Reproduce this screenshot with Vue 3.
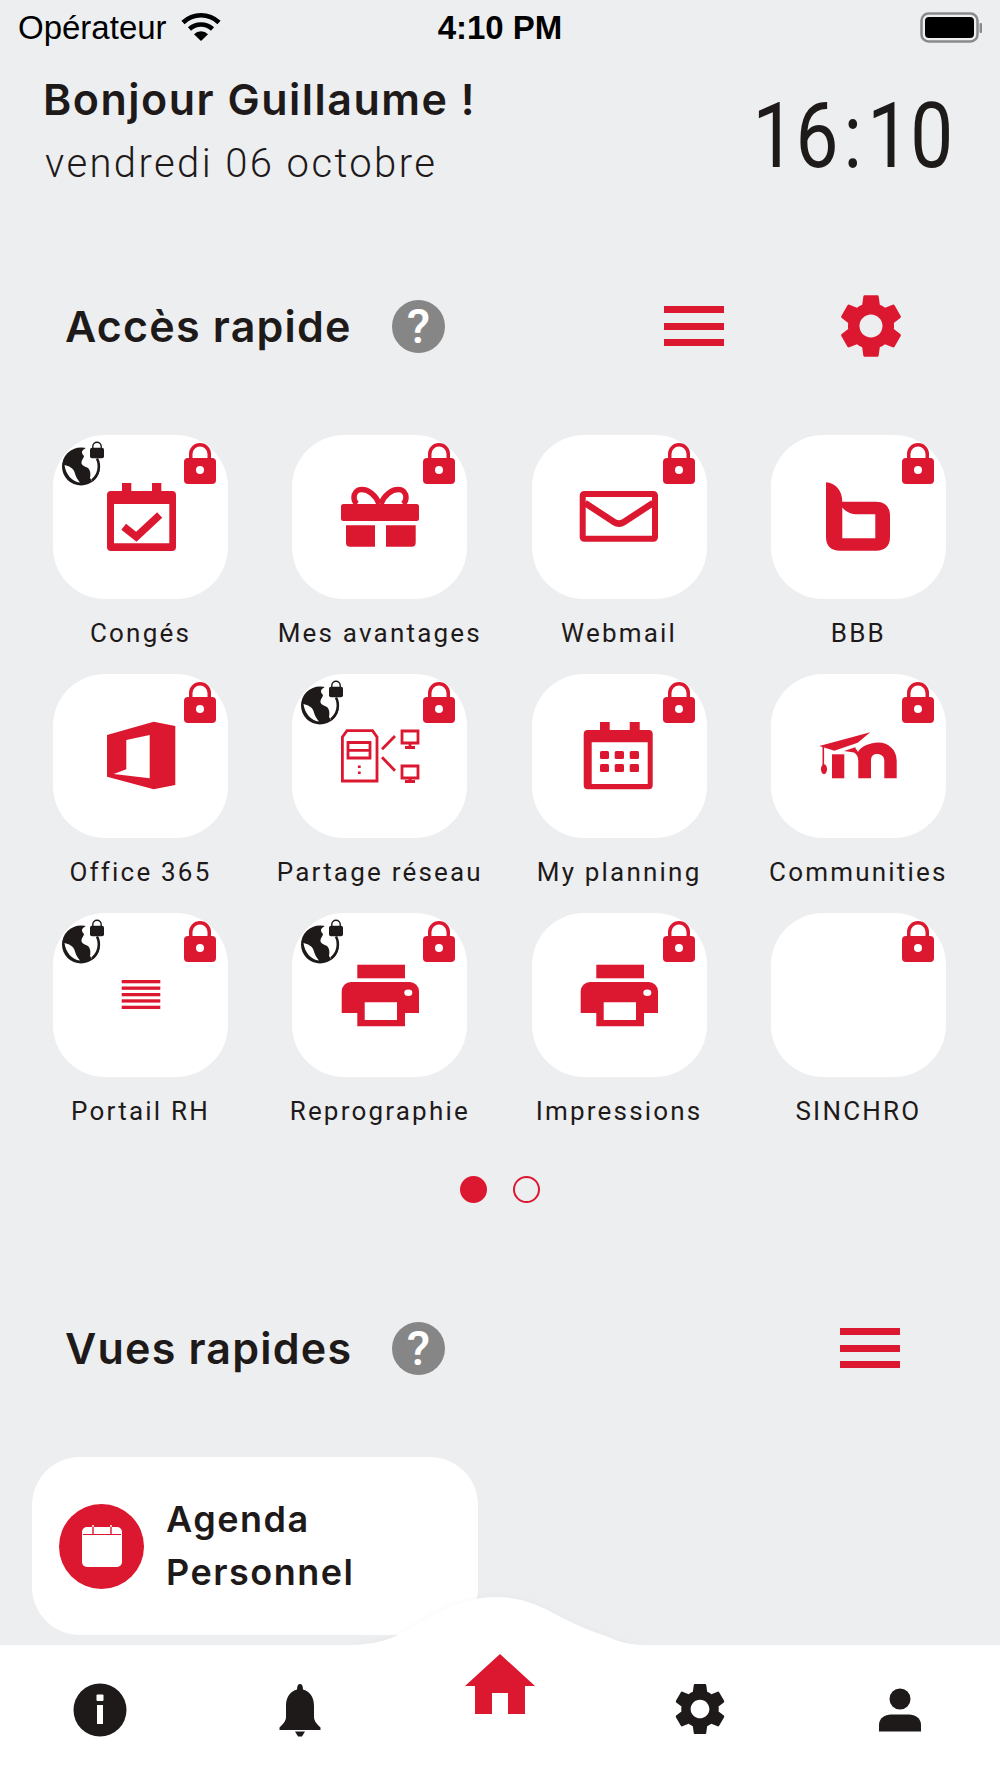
<script setup>
const tiles = [
  { label: 'Congés', icon: 'check', web: true },
  { label: 'Mes avantages', icon: 'gift' },
  { label: 'Webmail', icon: 'mail' },
  { label: 'BBB', icon: 'bbb' },
  { label: 'Office 365', icon: 'office' },
  { label: 'Partage réseau', icon: 'network', web: true },
  { label: 'My planning', icon: 'planning' },
  { label: 'Communities', icon: 'moodle' },
  { label: 'Portail RH', icon: 'lines', web: true },
  { label: 'Reprographie', icon: 'printer', web: true },
  { label: 'Impressions', icon: 'printer' },
  { label: 'SINCHRO', icon: '' }
]
const gear = 'M19.14 12.94c.04-.3.06-.61.06-.94 0-.32-.02-.64-.07-.94l2.03-1.58c.18-.14.23-.41.12-.61l-1.92-3.32c-.12-.22-.37-.29-.59-.22l-2.39.96c-.5-.38-1.03-.7-1.62-.94l-.36-2.54c-.04-.24-.24-.41-.48-.41h-3.84c-.24 0-.43.17-.47.41l-.36 2.54c-.59.24-1.13.57-1.62.94l-2.39-.96c-.22-.08-.47 0-.59.22L2.74 8.87c-.12.21-.08.47.12.61l2.03 1.58c-.05.3-.09.63-.09.94s.02.64.07.94l-2.03 1.58c-.18.14-.23.41-.12.61l1.92 3.32c.12.22.37.29.59.22l2.39-.96c.5.38 1.03.7 1.62.94l.36 2.54c.05.24.24.41.48.41h3.84c.24 0 .44-.17.47-.41l.36-2.54c.59-.24 1.13-.56 1.62-.94l2.39.96c.22.08.47 0 .59-.22l1.92-3.32c.12-.22.07-.47-.12-.61l-2.01-1.58zM12 15.6c-1.98 0-3.6-1.62-3.6-3.6s1.62-3.6 3.6-3.6 3.6 1.62 3.6 3.6-1.62 3.6-3.6 3.6z'
</script>

<template>
  <div class="phone">
    <div class="status">
      <div class="carrier">
        <span>Opérateur</span>
        <svg class="wifi" width="40" height="30" viewBox="0 0 40 30">
          <path d="M2 11.5a26 26 0 0 1 36 0" fill="none" stroke="#000" stroke-width="4.6" />
          <path d="M8.5 18a17 17 0 0 1 23 0" fill="none" stroke="#000" stroke-width="4.6" />
          <path d="M13 23.2a10 10 0 0 1 14 0L20 30z" fill="#000" />
        </svg>
      </div>
      <div class="clock-small">4:10 PM</div>
      <svg class="battery" width="62" height="32" viewBox="0 0 62 32">
        <rect x="1.5" y="1.5" width="56" height="28" rx="7" fill="none" stroke="#8a8a8a" stroke-width="2.5" />
        <rect x="5" y="5" width="49" height="21" rx="4" fill="#000" />
        <rect x="59.5" y="11" width="2.5" height="10" rx="1" fill="#8a8a8a" />
      </svg>
    </div>

    <header class="hello">
      <div>
        <h1>Bonjour Guillaume !</h1>
        <p>vendredi 06 octobre</p>
      </div>
      <div class="time">16<span class="colon">:</span>10</div>
    </header>

    <section class="head first">
      <h2>Accès rapide</h2>
      <span class="help">?</span>
      <div class="burger"><i></i><i></i><i></i></div>
      <svg class="cog" width="64" height="64" viewBox="2 2 20 20"><path :d="gear" fill="#dc1830" /></svg>
    </section>

    <div class="grid">
      <div v-for="t in tiles" :key="t.label" class="tile">
        <div class="card">
          <svg v-if="t.web" class="globe" width="46" height="46" viewBox="0 0 46 46">
            <circle cx="21" cy="26.500" r="19" fill="#1f1a1a" />
            <path d="M4.500 25C9 26 13 28 14.500 32 15.500 36 17 39 20 42.500 12 42 5.500 34 4.500 25z" fill="#fff" />
            <path d="M27 5H46V26H40C40 32 37 37 32 41L30 38C31 33 30 30 28 28 24 26 21 25 21.500 22 22 19 24 18 24 16 22 14 21 12 23 10 25 9 27 7 27 5z" fill="#fff" />
            <path d="M37 18.500A17.800 17.800 0 0 1 32 40.500" fill="none" stroke="#1f1a1a" stroke-width="2.600" />
            <rect x="30" y="7.700" width="14" height="10.600" rx="2" fill="#1f1a1a" />
            <path d="M32.800 8.500V6.500a4.200 4.200 0 0 1 8.400 0v2" fill="none" stroke="#1f1a1a" stroke-width="1.400" />
          </svg>
          <svg class="lock" width="32" height="41" viewBox="0 0 32 41">
            <rect x="0" y="15" width="32" height="26" rx="4" fill="#dc1830" />
            <path d="M6.750 17V11a9.250 9.250 0 0 1 18.500 0v6" fill="none" stroke="#dc1830" stroke-width="3.500" />
            <circle cx="16" cy="27" r="4" fill="#fff" />
          </svg>

          <svg v-if="t.icon" width="90" height="90" viewBox="0 0 90 90">
            <g v-if="t.icon === 'check'" fill="#dc1830">
              <path fill-rule="evenodd" d="M26 11h9.300v8h20.700v-8h9.300v8H76a4 4 0 0 1 4 4v52a4 4 0 0 1-4 4H15a4 4 0 0 1-4-4V23a4 4 0 0 1 4-4h11zM18 32v39.300h55.300V32z" />
              <path d="M27.700 54.700l12.600 10 23.400-21.700" fill="none" stroke="#dc1830" stroke-width="7.500" />
            </g>
            <g v-else-if="t.icon === 'gift'" fill="#dc1830">
              <rect x="6" y="32" width="78" height="17" rx="2.500" />
              <path d="M11 53.300h29v21.400H15a4 4 0 0 1-4-4zM51 53.300h29.700V70.700a4 4 0 0 1-4 4H51z" />
              <path d="M44 32c-3-9-11-14.500-17-14.500-5.500 0-8 4-8 8 0 3 1 5 3 6.500M46 32c3-9 11-14.500 17-14.500 5.500 0 8 4 8 8 0 3-1 5-3 6.500" fill="none" stroke="#dc1830" stroke-width="5.500" />
            </g>
            <g v-else-if="t.icon === 'mail'" fill="none" stroke="#dc1830">
              <rect x="8.700" y="22" width="72.300" height="44.700" rx="1.500" stroke-width="6" />
              <path d="M11 31l29 19c3.500 2.300 6.500 2.300 10 0l29-19" stroke-width="6.500" />
            </g>
            <path v-else-if="t.icon === 'bbb'" fill="#dc1830" fill-rule="evenodd" d="M13 10.300c9.500.7 16.300 8 16.300 19.400H63c9 0 14 5 14 14V65c0 9-5 13.700-14 13.700H27C18 78.700 13 74 13 65zM29.300 35.500c3.700 4.500 8.700 6.800 15.700 6.800h17.300v24H29.300z" />
            <path v-else-if="t.icon === 'office'" fill="#dc1830" fill-rule="evenodd" d="M11 24L57.700 10.700 79.300 15V74L57.700 78.300 11 65.700zM30.300 29L53.700 24V67.300L17.700 63 30.300 58.300z" />
            <g v-else-if="t.icon === 'network'" fill="none" stroke="#dc1830" stroke-width="2.800">
              <path d="M7.400 26L12 19.700H37.500L42 26V70H7.400z" />
              <path d="M13 31.500H35V47H13zM13 39.300H35" />
              <path d="M24.300 54.500v2.500M24.300 60.500v2.500" />
              <path d="M60 25L47 38.300M47 46.300L60 59.700" />
              <path d="M67 20H83V32H67zM75 32V36M70 36.500H80M67 55H83V67H67zM75 67V70.500M70 70.500H80" />
            </g>
            <g v-else-if="t.icon === 'planning'" fill="#dc1830">
              <path fill-rule="evenodd" d="M26 11h9.700v8h20v-8h10v8H75a4 4 0 0 1 3.700 4v51.300a4 4 0 0 1-4 4H13.700a4 4 0 0 1-4-4V23a4 4 0 0 1 4-4H26zM17.700 31.300V73h56V31.300z" />
              <rect x="26" y="40" width="9" height="8" rx="1.500" />
              <rect x="40.700" y="40" width="9.300" height="8" rx="1.500" />
              <rect x="55.700" y="40" width="9.300" height="8" rx="1.500" />
              <rect x="26" y="53" width="9" height="8" rx="1.500" />
              <rect x="40.700" y="53" width="9.300" height="8" rx="1.500" />
              <rect x="55.700" y="53" width="9.300" height="8" rx="1.500" />
            </g>
            <g v-else-if="t.icon === 'moodle'" fill="#dc1830">
              <path d="M6.300 35L57.300 21.300 44.700 31.700 21.300 39.700z" />
              <path d="M10.300 36V54" stroke="#dc1830" stroke-width="1.600" fill="none" />
              <ellipse cx="11" cy="58.300" rx="3" ry="5" />
              <path d="M19 43.300h12.300v24H19z" />
              <path d="M31 40l12-4c-2 1 1.500 3 2 5 3-6 13-9.500 20-9.500 11 0 18.700 7.500 18.700 18.500v17.300H71.300V50c0-5-3.300-7-7.300-7-4 0-6 2-6 7v17.300H45.300V50c0-4-1.500-7-4.300-8.500z" />
            </g>
            <g v-else-if="t.icon === 'lines'" fill="#dc1830">
              <rect x="25.700" y="30" width="38.600" height="3.300" />
              <rect x="25.700" y="36.500" width="38.600" height="3.300" />
              <rect x="25.700" y="43" width="38.600" height="3.300" />
              <rect x="25.700" y="49.300" width="38.600" height="3.300" />
              <rect x="25.700" y="55.700" width="38.600" height="3.300" />
            </g>
            <g v-else-if="t.icon === 'printer'" fill="#dc1830">
              <rect x="22.300" y="14.700" width="47.700" height="13.600" />
              <path fill-rule="evenodd" d="M16 32H74.700a9.300 9.300 0 0 1 9.300 9.300V63H70V76.300H22.300V63H6.700V41.300A9.300 9.300 0 0 1 16 32zM29.700 52.300V70H62V52.300z" />
              <ellipse cx="73.300" cy="42.700" rx="4" ry="3.200" fill="#fff" />
            </g>
          </svg>
        </div>
        <div class="label">{{ t.label }}</div>
      </div>
    </div>

    <div class="dots"><i class="on"></i><i></i></div>

    <section class="head second">
      <h2>Vues rapides</h2>
      <span class="help">?</span>
      <div class="burger"><i></i><i></i><i></i></div>
    </section>

    <div class="agenda">
      <span class="round">
        <svg width="40" height="42" viewBox="0 0 40 42">
          <path d="M5 2h30a5 5 0 0 1 5 5v30a5 5 0 0 1-5 5H5a5 5 0 0 1-5-5V7a5 5 0 0 1 5-5z" fill="#fff" />
          <path d="M1 9.500h38" fill="none" stroke="#dc1830" stroke-width="1.200" />
          <path d="M11 2v7M29 2v7" fill="none" stroke="#dc1830" stroke-width="1.400" />
          <path d="M11 0v2M29 0v2" fill="none" stroke="#fff" stroke-width="1.400" />
        </svg>
      </span>
      <div class="agenda-text">Agenda<br />Personnel</div>
    </div>

    <nav class="tabbar">
      <svg class="bump" width="340" height="52" viewBox="0 0 340 52">
        <path d="M0 52C30 52 48 48 63 41 90 27 120 3 162 3 185 3 205 12 218 19 235 28 250 35 268 41 285 48 295 52 325 52Z" fill="#fff" />
      </svg>
      <div class="tab">
        <svg width="54" height="54" viewBox="0 0 54 54">
          <circle cx="27" cy="27" r="26.500" fill="#1f1a1a" />
          <rect x="23.500" y="11.500" width="7" height="6.500" rx="1" fill="#fff" />
          <rect x="24" y="22" width="6" height="19" fill="#fff" />
        </svg>
      </div>
      <div class="tab">
        <svg width="44" height="54" viewBox="0 0 44 54">
          <path d="M22 1c2 0 3 2 3 5.500C33 9 36 15 36 23V34c0 4 3 7 6.500 10.500V47H1.500V44.500C5 41 8 38 8 34V23C8 15 11 9 19 6.500 19 3 20 1 22 1z" fill="#1f1a1a" />
          <path d="M17 48.500H27L24 53.500H20z" fill="#1f1a1a" />
        </svg>
      </div>
      <div class="tab home">
        <svg width="72" height="62" viewBox="0 0 72 62">
          <path d="M36 1L71 33H61V61H44V40H28V61H11V33H1z" fill="#dc1830" />
        </svg>
      </div>
      <div class="tab">
        <svg width="52" height="52" viewBox="2 2 20 20"><path :d="gear" fill="#1f1a1a" /></svg>
      </div>
      <div class="tab">
        <svg width="44" height="44" viewBox="0 0 44 44">
          <ellipse cx="22" cy="11" rx="10.500" ry="10.500" fill="#1f1a1a" />
          <path d="M1 43.500V37c0-7 6-10.500 12-10.500h18C37 26.500 43 30 43 37v6.500z" fill="#1f1a1a" />
        </svg>
      </div>
    </nav>
  </div>
</template>

<style>
body {
  background: #edeef0;
}
</style>

<style scoped>
.phone {
  position: relative;
  width: 1000px;
  height: 1778px;
  overflow: hidden;
  background: #edeef0;
  color: #1f1a1a;
  font-family: Roboto, "Liberation Sans", sans-serif;
}

.status {
  height: 55px;
  display: flex;
  align-items: center;
  justify-content: space-between;
  padding: 0 18px;
  position: relative;
  color: #000;
  font-family: "Liberation Sans", sans-serif;
  font-size: 33px;
}
.carrier {
  display: flex;
  align-items: center;
  gap: 14px;
}
.wifi {
  margin-top: -3px;
}
.clock-small {
  position: absolute;
  left: 0;
  right: 0;
  text-align: center;
  font-weight: 700;
}

.hello {
  display: flex;
  justify-content: space-between;
  padding: 16px 47px 0 43px;
}
.hello h1 {
  margin: 0;
  font: 600 43px/56px Inter, sans-serif;
  letter-spacing: 1.500px;
}
.hello p {
  margin: 13px 0 0 2px;
  font: 300 40px/48px Roboto, sans-serif;
  letter-spacing: 2.400px;
}
.time {
  font: 400 90px/110px Roboto, sans-serif;
  margin-top: 11px;
  transform: scaleX(0.85);
  transform-origin: right center;
}
.colon {
  margin: 0 6px;
}

.head {
  display: flex;
  align-items: center;
  padding-left: 65px;
  height: 64px;
}
.head.first {
  margin-top: 102px;
}
.head.second {
  margin-top: 113px;
}
.head h2 {
  margin: 0;
  font: 600 43px/64px Inter, sans-serif;
  letter-spacing: 1.200px;
  width: 327px;
  white-space: nowrap;
}
.help {
  width: 53px;
  height: 53px;
  border-radius: 50%;
  background: #878686;
  color: #fff;
  font: 500 48px/53px Roboto, sans-serif;
  text-align: center;
}
.burger {
  width: 60px;
  display: flex;
  flex-direction: column;
  gap: 9.500px;
  margin-left: 219px;
}
.second .burger {
  margin-left: 395px;
}
.burger i {
  display: block;
  height: 7px;
  background: #dc1830;
}
.cog {
  margin-left: 115px;
}

.grid {
  display: grid;
  grid-template-columns: repeat(4, 175px);
  grid-auto-rows: 239px;
  column-gap: 64.300px;
  padding-left: 53px;
  margin-top: 77px;
}
.tile {
  display: flex;
  flex-direction: column;
  align-items: center;
}
.card {
  position: relative;
  width: 175px;
  height: 164px;
  border-radius: 52px;
  background: #fff;
  display: flex;
  align-items: center;
  justify-content: center;
  flex-shrink: 0;
}
.lock {
  position: absolute;
  top: 8px;
  right: 12px;
}
.globe {
  position: absolute;
  top: 5px;
  left: 7px;
}
.label {
  margin-top: 17px;
  font-size: 26px;
  line-height: 34px;
  letter-spacing: 2.200px;
  white-space: nowrap;
}

.dots {
  display: flex;
  justify-content: center;
  gap: 26px;
  margin-top: 24px;
}
.dots i {
  width: 27px;
  height: 27px;
  box-sizing: border-box;
  border-radius: 50%;
  border: 2.500px solid #dc1830;
}
.dots i.on {
  background: #dc1830;
}

.agenda {
  width: 446px;
  height: 178px;
  margin: 77px 0 0 32px;
  box-sizing: border-box;
  padding-left: 27px;
  display: flex;
  align-items: center;
  gap: 22px;
  border-radius: 48px;
  background: #fff;
}
.round {
  width: 85px;
  height: 85px;
  border-radius: 50%;
  background: #dc1830;
  display: flex;
  align-items: center;
  justify-content: center;
}
.agenda-text {
  font: 600 36px/53px Inter, sans-serif;
  letter-spacing: 1.500px;
}

.tabbar {
  position: absolute;
  left: 0;
  right: 0;
  bottom: 0;
  height: 133px;
  display: flex;
  background: #fff;
}
.bump {
  position: absolute;
  left: 335px;
  bottom: 100%;
  margin-bottom: -1px;
  filter: drop-shadow(0 -2px 2px rgba(0, 0, 0, 0.02));
}
.tab {
  flex: 1;
  display: flex;
  justify-content: center;
  padding-top: 38px;
}
.tab.home {
  padding-top: 8px;
}
.tab:last-child {
  padding-top: 43px;
}
</style>
